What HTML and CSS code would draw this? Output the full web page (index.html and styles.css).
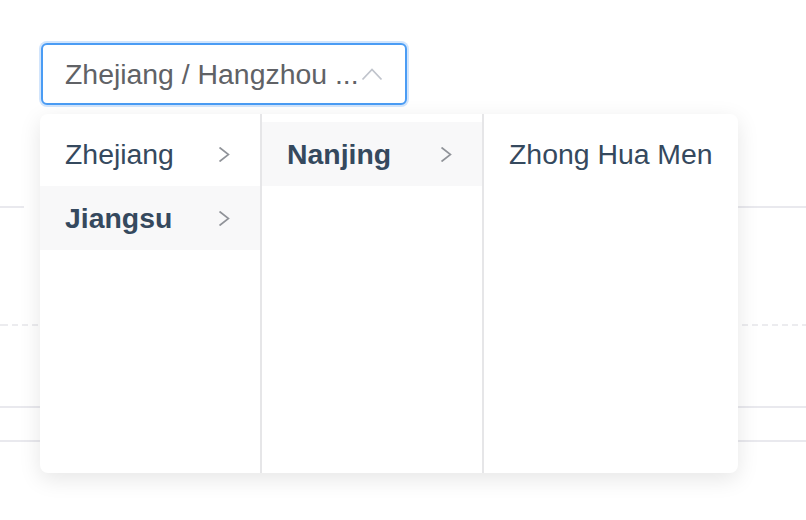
FILE: index.html
```html
<!DOCTYPE html>
<html>
<head>
<meta charset="utf-8">
<link rel="stylesheet" href="styles.css">
</head>
<body>
<div class="page">
  <div class="cascader">
    <span class="cascader-text">Zhejiang / Hangzhou ...</span>
    <svg class="caret" width="22" height="14" viewBox="0 0 22 14"><path d="M1.5 12.5 L11 2.5 L20.5 12.5" fill="none" stroke="#c0c4cc" stroke-width="1.8"/></svg>
  </div>

  <div class="backdrop">
    <div class="rule rule-a"></div>
    <div class="rule rule-dashed"></div>
    <div class="rule rule-c"></div>
    <div class="rule rule-d"></div>
  </div>

  <div class="dropdown">
    <div class="menu menu-1">
      <div class="item"><span>Zhejiang</span><svg class="chev" width="12" height="17" viewBox="0 0 12 17"><path d="M1.5 1.5 L10.5 8.5 L1.5 15.5" fill="none" stroke="#909399" stroke-width="1.6"/></svg></div>
      <div class="item active"><span>Jiangsu</span><svg class="chev" width="12" height="17" viewBox="0 0 12 17"><path d="M1.5 1.5 L10.5 8.5 L1.5 15.5" fill="none" stroke="#909399" stroke-width="1.6"/></svg></div>
    </div>
    <div class="menu menu-2">
      <div class="item active"><span>Nanjing</span><svg class="chev" width="12" height="17" viewBox="0 0 12 17"><path d="M1.5 1.5 L10.5 8.5 L1.5 15.5" fill="none" stroke="#909399" stroke-width="1.6"/></svg></div>
    </div>
    <div class="menu menu-3">
      <div class="item leaf"><span>Zhong Hua Men</span></div>
    </div>
  </div>
</div>
</body>
</html>
```

FILE: styles.css
```css
html, body {
  margin: 0;
  padding: 0;
  background: #ffffff;
}

.page {
  position: relative;
  width: 806px;
  height: 520px;
  overflow: hidden;
  font-family: "Liberation Sans", Arial, Helvetica, sans-serif;
}

.cascader {
  box-sizing: border-box;
  margin: 43px 0 0 41px;
  width: 366px;
  height: 62px;
  border: 2px solid #4a9cf4;
  border-radius: 6px;
  box-shadow: 0 0 0 2px #d2e5fc;
  display: flex;
  align-items: center;
  padding-left: 22px;
  background: #fff;
}

.cascader-text {
  font-size: 28.4px;
  color: #606266;
  white-space: nowrap;
}

.caret {
  margin-left: 2px;
  margin-top: -1px;
}

.backdrop {
  display: flex;
  flex-direction: column;
}

.rule {
  height: 2px;
  width: 100%;
}

.rule-a {
  margin-top: 101px;
  background: linear-gradient(to right, #e9e9ee 0 24px, transparent 24px 720px, #e9e9ee 720px);
}

.rule-dashed {
  margin-top: 116px;
  background: repeating-linear-gradient(to right, #ececef 0 6px, transparent 6px 10px);
  background-position: 2px 0;
}

.rule-c {
  margin-top: 80px;
  background: #e9e9ee;
}

.rule-d {
  margin-top: 32px;
  background: #e9e9ee;
}

.dropdown {
  position: absolute;
  left: 40px;
  top: 114px;
  width: 698px;
  height: 359px;
  background: #fff;
  border-radius: 8px;
  box-shadow: 0 6px 22px rgba(0, 0, 0, 0.10);
  display: flex;
  overflow: hidden;
}

.menu {
  box-sizing: border-box;
  padding-top: 8px;
  height: 100%;
}

.menu-1, .menu-2 {
  width: 222px;
  border-right: 2px solid #e6e6e8;
}

.menu-3 {
  flex: 1;
}

.item {
  height: 64px;
  display: flex;
  align-items: center;
  justify-content: space-between;
  padding: 0 30px 0 25px;
  font-size: 28.4px;
  color: #35495e;
  white-space: nowrap;
}

.item.leaf {
  padding-right: 0;
}

.item.active {
  background: #f8f8f9;
  font-weight: 700;
}

.chev {
  margin-top: 1px;
}
```
